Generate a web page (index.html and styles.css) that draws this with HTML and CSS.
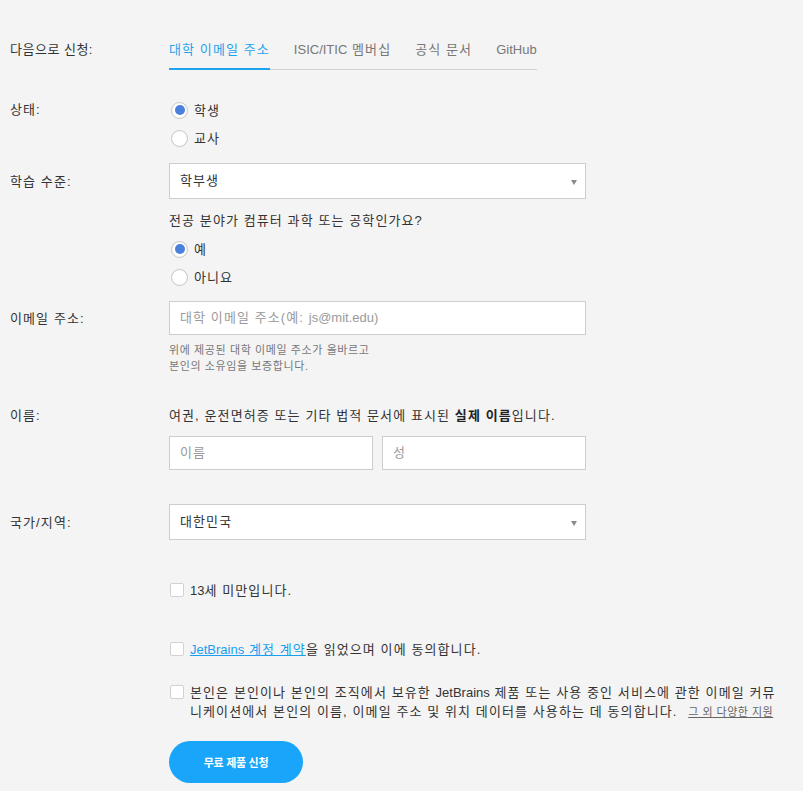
FILE: index.html
```html
<!DOCTYPE html>
<html lang="ko">
<head>
<meta charset="utf-8">
<title>JetBrains 무료 제품 신청</title>
<link rel="stylesheet" href="styles.css">
</head>
<body>
<div class="page">
  <div class="row row-tabs">
    <div class="label">다음으로 신청:</div>
    <div class="tabs">
      <a class="tab active">대학 이메일 주소</a>
      <a class="tab"><span class="en">ISIC/ITIC</span> 멤버십</a>
      <a class="tab">공식 문서</a>
      <a class="tab en">GitHub</a>
    </div>
  </div>

  <div class="row row-status">
    <div class="label label-radio">상태:</div>
    <div class="field">
      <div class="radio-group">
        <label class="radio"><span class="dot checked"></span>학생</label>
        <label class="radio"><span class="dot"></span>교사</label>
      </div>
    </div>
  </div>

  <div class="row row-level">
    <div class="label label-mid">학습 수준:</div>
    <div class="field">
      <div class="select">학부생<span class="caret"></span></div>
    </div>
  </div>

  <div class="row row-question">
    <div class="label"></div>
    <div class="field">
      <div class="question">전공 분야가 컴퓨터 과학 또는 공학인가요?</div>
      <div class="radio-group radio-group-q">
        <label class="radio"><span class="dot checked"></span>예</label>
        <label class="radio"><span class="dot"></span>아니요</label>
      </div>
    </div>
  </div>

  <div class="row row-email">
    <div class="label label-mid">이메일 주소:</div>
    <div class="field">
      <div class="input placeholder">대학 이메일 주소(예: <span class="en">js@mit.edu)</span></div>
    </div>
  </div>
  <div class="row">
    <div class="label"></div>
    <div class="field helper">위에 제공된 대학 이메일 주소가 올바르고<br>본인의 소유임을 보증합니다.</div>
  </div>

  <div class="row row-name">
    <div class="label">이름:</div>
    <div class="field">
      <div class="name-note">여권, 운전면허증 또는 기타 법적 문서에 표시된 <b>실제 이름</b>입니다.</div>
      <div class="name-inputs">
        <div class="input placeholder">이름</div>
        <div class="input placeholder">성</div>
      </div>
    </div>
  </div>

  <div class="row row-country">
    <div class="label label-mid">국가/지역:</div>
    <div class="field">
      <div class="select">대한민국<span class="caret"></span></div>
    </div>
  </div>

  <div class="row row-age">
    <div class="label"></div>
    <label class="check"><span class="box"></span><span><span class="en">13</span>세 미만입니다.</span></label>
  </div>

  <div class="row row-terms">
    <div class="label"></div>
    <label class="check"><span class="box"></span><span><a class="link"><span class="en">JetBrains</span> 계정 계약</a>을 읽었으며 이에 동의합니다.</span></label>
  </div>

  <div class="row row-consent">
    <div class="label"></div>
    <label class="check check-wide"><span class="box"></span><span class="consent-text">본인은 본인이나 본인의 조직에서 보유한 <span class="en">JetBrains</span> 제품 또는 사용 중인 서비스에 관한 이메일 커뮤니케이션에서 본인의 이름, 이메일 주소 및 위치 데이터를 사용하는 데 동의합니다. <a class="more">그 외 다양한 지원</a></span></label>
  </div>

  <div class="row row-submit">
    <div class="label"></div>
    <button class="submit">무료 제품 신청</button>
  </div>
</div>
</body>
</html>
```
FILE: styles.css
```css
html, body {
  margin: 0;
  padding: 0;
  background: #f4f4f4;
}
body {
  font-family: "Liberation Sans", "Noto Sans CJK KR", sans-serif;
  font-size: 13px;
  line-height: 19px;
  letter-spacing: 1.1px;
  color: #333;
}
.en {
  letter-spacing: 0;
}
.page {
  padding: 40px 0 40px 10px;
}
.row {
  display: flex;
  align-items: flex-start;
}
.label {
  width: 159px;
  flex: none;
  color: #333;
}
.row-tabs .label {
  letter-spacing: 0.5px;
}
.label-radio {
  line-height: 28px;
}
.label-mid {
  align-self: center;
}
.field {
  width: 417px;
}

/* tabs */
.tabs {
  display: flex;
  gap: 24px;
  border-bottom: 1px solid #d3d3d3;
}
.tab {
  color: #777;
  padding-bottom: 9px;
  margin-bottom: -1px;
  border-bottom: 2px solid transparent;
  cursor: pointer;
}
.tab.active {
  color: #1ea3ee;
  border-bottom-color: #1ea3ee;
}

/* radios */
.row-status { margin-top: 26px; }
.radio {
  display: flex;
  align-items: center;
  height: 28px;
  gap: 6px;
}
.dot {
  width: 15px;
  height: 15px;
  margin-left: 2px;
  border-radius: 50%;
  border: 1px solid #c6c6c6;
  background: #fff;
  box-shadow: inset 0 0 1px rgba(0,0,0,0.08);
  position: relative;
  flex: none;
}
.dot.checked::after {
  content: "";
  position: absolute;
  left: 2.5px;
  top: 2.5px;
  width: 10px;
  height: 10px;
  border-radius: 50%;
  background: #4a7fdb;
}

/* selects / inputs */
.select, .input {
  box-sizing: border-box;
  background: #fff;
  border: 1px solid #cdcdcd;
  padding: 0 10px;
  position: relative;
}
.select {
  height: 36px;
  line-height: 34px;
}
.input {
  height: 34px;
  line-height: 32px;
}
.placeholder {
  color: #9a9a9a;
}
.caret {
  position: absolute;
  right: 8px;
  top: 16px;
  width: 0;
  height: 0;
  border-left: 3.5px solid transparent;
  border-right: 3.5px solid transparent;
  border-top: 5px solid #8a8a8a;
}
.row-level { margin-top: 11px; }
.row-question { margin-top: 12px; }
.radio-group-q { margin-top: 5px; }
.row-email { margin-top: 10px; }
.helper {
  margin-top: 7px;
  font-size: 11px;
  line-height: 16px;
  letter-spacing: 0.6px;
  color: #777;
}
.row-name { margin-top: 32px; }
.name-note b { font-weight: bold; color: #222; }
.name-inputs {
  display: flex;
  gap: 9px;
  margin-top: 11px;
}
.name-inputs .input { flex: 1; }
.row-country { margin-top: 34px; }

/* checkboxes */
.check {
  display: flex;
  align-items: flex-start;
  gap: 6px;
}
.box {
  flex: none;
  width: 14px;
  height: 14px;
  box-sizing: border-box;
  margin: 2px 0 0 1px;
  background: #fff;
  border: 1px solid #d2d2d2;
  border-radius: 2px;
}
.row-age { margin-top: 41px; }
.row-terms { margin-top: 40px; }
.link {
  color: #1a9ff0;
  text-decoration: underline;
}
.row-consent { margin-top: 24px; }
.check-wide { width: 612px; }
.consent-text { flex: 1; }
.more {
  margin-left: 6px;
  font-size: 11px;
  letter-spacing: 0.5px;
  color: #666;
  text-decoration: underline;
}

/* submit */
.row-submit { margin-top: 19px; }
.submit {
  width: 134px;
  height: 42px;
  border: none;
  border-radius: 21px;
  background: #19a5fa;
  color: #fff;
  font-family: "Liberation Sans", "Noto Sans CJK KR", sans-serif;
  font-size: 11px;
  letter-spacing: -0.3px;
  font-weight: bold;
  cursor: pointer;
}
```
